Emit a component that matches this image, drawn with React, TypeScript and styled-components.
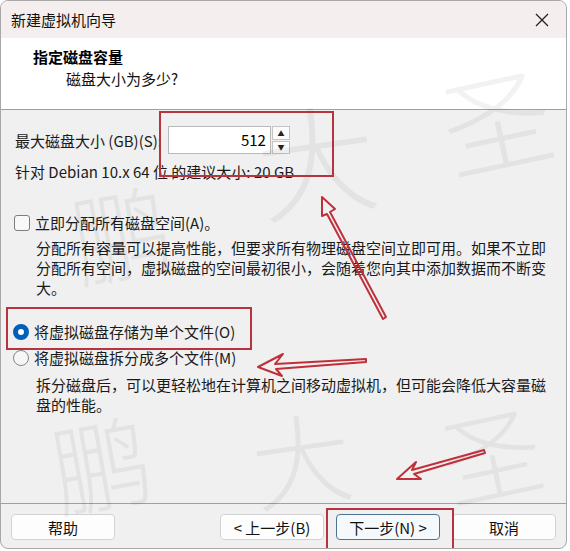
import styled, { createGlobalStyle } from "styled-components"

const GlobalStyle = createGlobalStyle`
    html, body {
        margin: 0;
        padding: 0;
        background: #ffffff;
    }

    body {
        font-family: "Noto Sans CJK SC", "Noto Sans", sans-serif;
        font-size: 15px;
        color: #1a1a1a;
    }
`

export default function App() {
    return (
        <>
            <GlobalStyle />
            <StyledWizard>
                <TitleBar>
                    <span>新建虚拟机向导</span>
                    <CloseButton title="关闭">
                        <svg width="16" height="16" viewBox="0 0 16 16">
                            <path d="M2 2 L14 14 M14 2 L2 14" stroke="#222" strokeWidth="1.3" />
                        </svg>
                    </CloseButton>
                </TitleBar>

                <Header>
                    <HeaderTitle>指定磁盘容量</HeaderTitle>
                    <HeaderSub>磁盘大小为多少?</HeaderSub>
                </Header>

                <Body>
                    <SizeRow>
                        <span>最大磁盘大小 (GB)(S):</span>
                        <SpinBox>
                            <SpinInput>512</SpinInput>
                            <SpinButtons>
                                <SpinButton>▲</SpinButton>
                                <SpinButton>▼</SpinButton>
                            </SpinButtons>
                        </SpinBox>
                    </SizeRow>
                    <Recommend>针对 Debian 10.x 64 位 的建议大小: 20 GB</Recommend>

                    <OptionRow $top={31}>
                        <CheckBox />
                        <span>立即分配所有磁盘空间(A)。</span>
                    </OptionRow>
                    <Description $top={5}>
                        分配所有容量可以提高性能，但要求所有物理磁盘空间立即可用。如果不立即分配所有空间，虚拟磁盘的空间最初很小，会随着您向其中添加数据而不断变大。
                    </Description>

                    <OptionRow $top={24}>
                        <Radio $checked />
                        <span>将虚拟磁盘存储为单个文件(O)</span>
                    </OptionRow>
                    <OptionRow $top={6}>
                        <Radio />
                        <span>将虚拟磁盘拆分成多个文件(M)</span>
                    </OptionRow>
                    <Description $top={7}>
                        拆分磁盘后，可以更轻松地在计算机之间移动虚拟机，但可能会降低大容量磁盘的性能。
                    </Description>
                </Body>

                <Footer>
                    <Button>帮助</Button>
                    <ButtonGroup>
                        <Button>&lt; 上一步(B)</Button>
                        <Button $primary>下一步(N) &gt;</Button>
                        <Button>取消</Button>
                    </ButtonGroup>
                </Footer>

                {/* watermark */}
                <Watermark $x={255} $y={95} $size={120} $rot={-8}>大</Watermark>
                <Watermark $x={440} $y={60} $size={110} $rot={-12}>圣</Watermark>
                <Watermark $x={70} $y={180} $size={100} $rot={-10}>鹏</Watermark>
                <Watermark $x={440} $y={400} $size={100} $rot={-12}>圣</Watermark>
                <Watermark $x={50} $y={410} $size={100} $rot={-10}>鹏</Watermark>
                <Watermark $x={250} $y={405} $size={100} $rot={-8}>大</Watermark>

                {/* annotation boxes */}
                <Mark $x={158} $y={110} $w={175} $h={66} />
                <Mark $x={5} $y={306} $w={246} $h={43} />
                <Mark $x={325} $y={507} $w={128} $h={46} />

                <Arrows width="570" height="551" viewBox="0 0 570 551">
                    <g fill="none" stroke="#c0303a" strokeWidth="2" strokeLinejoin="round">
                        <path d="M386 317 L330 212 L335 209 L322 197 L322 216 L327 214 L383 319 Z" />
                        <path d="M366 359 L275 364 L283 354 L258 367 L282 376 L276 369 L366 362 Z" />
                        <path d="M484 450 L412 470 L416 462 L397 479 L421 479 L414 474 L485 453 Z" />
                    </g>
                </Arrows>
            </StyledWizard>
        </>
    )
}


const StyledWizard = styled.div`
    position: relative;
    width: 567px;
    height: 549px;
    display: flex;
    flex-direction: column;
    background: #f0f0f0;
    border: 1px solid #a8a8a8;
    border-radius: 8px;
    overflow: hidden;
    box-sizing: border-box;
`

const TitleBar = styled.div`
    height: 37px;
    flex-shrink: 0;
    display: flex;
    align-items: center;
    justify-content: space-between;
    padding: 0 12px 0 10px;
    background: #f4eeee;
    font-size: 15px;
    color: #111;
`

const CloseButton = styled.span`
    display: flex;
    align-items: center;
    padding-right: 4px;
`

const Header = styled.div`
    height: 72px;
    flex-shrink: 0;
    background: #ffffff;
    border-bottom: 1px solid #a0a0a0;
    padding: 8px 0 0 32px;
    box-sizing: border-box;
`

const HeaderTitle = styled.div`
    font-weight: 700;
    font-size: 15px;
    line-height: 22px;
    color: #000;
`

const HeaderSub = styled.div`
    font-size: 15px;
    line-height: 22px;
    padding-left: 33px;
    color: #111;
`

const Body = styled.div`
    flex: 1;
    display: flex;
    flex-direction: column;
    padding: 15px 20px 0 13px;
`

const SizeRow = styled.div`
    display: flex;
    align-items: center;
    gap: 6px;
    padding-left: 1px;
    height: 30px;
`

const SpinBox = styled.div`
    display: flex;
    align-items: stretch;
    height: 28px;
    gap: 1px;
`

const SpinInput = styled.div`
    width: 97px;
    background: #ffffff;
    border: 1px solid #b9b9b9;
    text-align: right;
    padding-right: 4px;
    line-height: 26px;
    font-size: 15px;
    color: #000;
`

const SpinButtons = styled.div`
    display: flex;
    flex-direction: column;
    gap: 1px;
    width: 18px;
`

const SpinButton = styled.div`
    flex: 1;
    display: flex;
    align-items: center;
    justify-content: center;
    background: #fbfbfb;
    border: 1px solid #c4c4c4;
    font-size: 7px;
    color: #222;
`

const Recommend = styled.div`
    margin-top: 7px;
    padding-left: 1px;
    line-height: 20px;
`

const OptionRow = styled.div<{ $top: number }>`
    display: flex;
    align-items: center;
    gap: 5px;
    margin-top: ${({ $top }) => $top}px;
    line-height: 20px;
`

const CheckBox = styled.span`
    width: 14px;
    height: 14px;
    border: 1px solid #7d7d7d;
    border-radius: 3px;
    background: #f8f8f8;
    flex-shrink: 0;
`

const Radio = styled.span<{ $checked?: boolean }>`
    width: 16px;
    height: 16px;
    border-radius: 50%;
    box-sizing: border-box;
    flex-shrink: 0;
    margin-left: -1px;
    background: ${({ $checked }) => ($checked ? "#ffffff" : "#f6f6f6")};
    border: ${({ $checked }) => ($checked ? "5px solid #005fb8" : "1px solid #858585")};
`

const Description = styled.div<{ $top: number }>`
    padding-left: 22px;
    margin-top: ${({ $top }) => $top}px;
    line-height: 20px;
    color: #1a1a1a;
`

const Footer = styled.div`
    height: 45px;
    flex-shrink: 0;
    border-top: 1px solid #a0a0a0;
    display: flex;
    align-items: flex-start;
    justify-content: space-between;
    padding: 10px 10px 0 10px;
    box-sizing: border-box;
`

const ButtonGroup = styled.div`
    display: flex;
    gap: 12px;
`

const Button = styled.div<{ $primary?: boolean }>`
    width: 104px;
    height: 26px;
    box-sizing: border-box;
    display: flex;
    align-items: center;
    justify-content: center;
    background: ${({ $primary }) => ($primary ? "#f6f9fc" : "#fdfdfd")};
    border: 1px solid ${({ $primary }) => ($primary ? "#4f7393" : "#d3d3d3")};
    border-radius: 4px;
    font-size: 15px;
    color: #111;
`

const Watermark = styled.span<{ $x: number; $y: number; $size: number; $rot: number }>`
    position: absolute;
    left: ${({ $x }) => $x}px;
    top: ${({ $y }) => $y}px;
    font-size: ${({ $size }) => $size}px;
    line-height: 1;
    font-weight: 300;
    color: rgba(0, 0, 0, 0.05);
    transform: rotate(${({ $rot }) => $rot}deg);
    pointer-events: none;
`

const Mark = styled.div<{ $x: number; $y: number; $w: number; $h: number }>`
    position: absolute;
    left: ${({ $x }) => $x}px;
    top: ${({ $y }) => $y}px;
    width: ${({ $w }) => $w}px;
    height: ${({ $h }) => $h}px;
    border: 2px solid #b8333d;
    box-sizing: border-box;
    pointer-events: none;
`

const Arrows = styled.svg`
    position: absolute;
    left: -1px;
    top: -1px;
    pointer-events: none;
`
